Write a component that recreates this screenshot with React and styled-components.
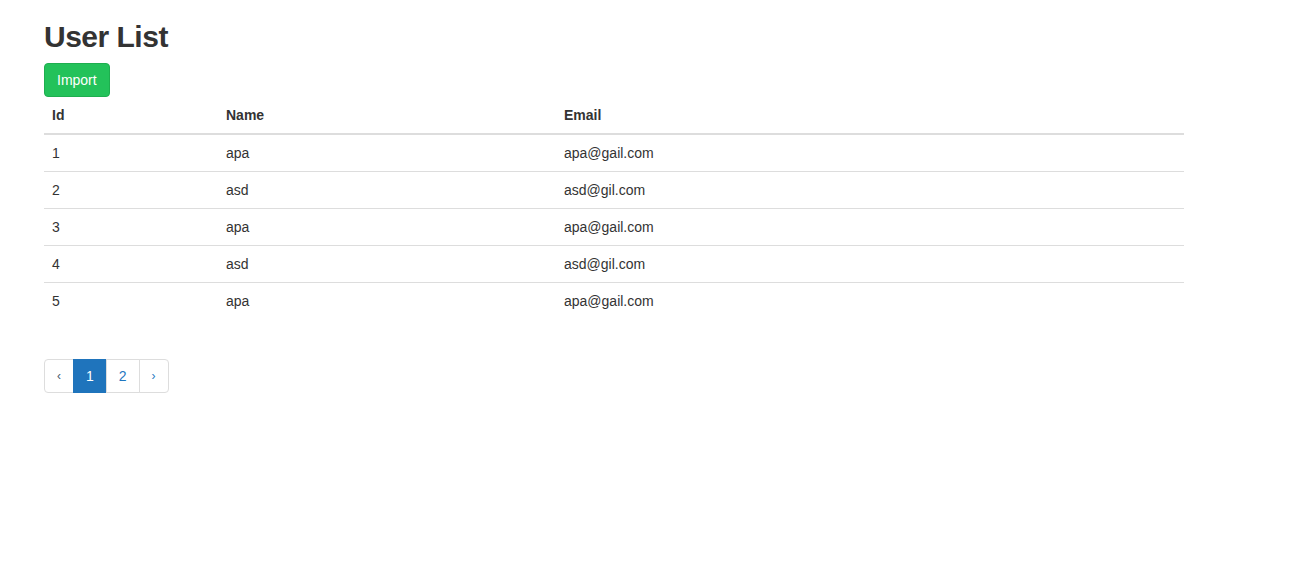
import styled, { createGlobalStyle } from 'styled-components';

const GlobalStyle = createGlobalStyle`
  body {
    margin: 0;
    background: #fff;
    font-family: "Liberation Sans", Arial, Helvetica, sans-serif;
    font-size: 14px;
    line-height: 1.42857;
    color: #333;
  }
  * { box-sizing: border-box; }
`

const users = [
    {id: 1, name: 'apa', email: 'apa@gail.com'},
    {id: 2, name: 'asd', email: 'asd@gil.com'},
    {id: 3, name: 'apa', email: 'apa@gail.com'},
    {id: 4, name: 'asd', email: 'asd@gil.com'},
    {id: 5, name: 'apa', email: 'apa@gail.com'},
]

const App = () => {
    return (
        <>
            <GlobalStyle/>
            <Container>
                <Title>User List</Title>
                <ImportButton type={'button'}>Import</ImportButton>
                <Table>
                    <thead>
                    <tr>
                        <Th width={174}>Id</Th>
                        <Th width={338}>Name</Th>
                        <Th>Email</Th>
                    </tr>
                    </thead>
                    <tbody>
                    {users.map(u => (
                        <tr key={u.id}>
                            <Td>{u.id}</Td>
                            <Td>{u.name}</Td>
                            <Td>{u.email}</Td>
                        </tr>
                    ))}
                    </tbody>
                </Table>
                <Pagination>
                    <PageItem $muted>‹</PageItem>
                    <PageItem $active>1</PageItem>
                    <PageItem>2</PageItem>
                    <PageItem $small>›</PageItem>
                </Pagination>
            </Container>
        </>
    );
}

export default App;

const Container = styled.div`
  width: 1140px;
  margin-left: 44px;
`

const Title = styled.h2`
  margin: 20px 0 10px;
  font-size: 30px;
  font-weight: bold;
  letter-spacing: -0.5px;
  line-height: 1.1;
  color: #333;
`

const ImportButton = styled.button`
  display: block;
  height: 34px;
  padding: 6px 12px;
  font-family: inherit;
  font-size: 14px;
  line-height: 20px;
  color: #fff;
  background-color: #23c25a;
  border: 1px solid #1eae4f;
  border-radius: 4px;
`

const Table = styled.table`
  width: 100%;
  border-collapse: collapse;
  border-spacing: 0;
  margin-bottom: 20px;

  tbody tr + tr td {
    border-top: 1px solid #ddd;
  }
`

const Th = styled.th`
  width: ${p => p.width ? `${p.width}px` : 'auto'};
  padding: 8px;
  text-align: left;
  font-weight: bold;
  line-height: 20px;
  border-bottom: 2px solid #ddd;
`

const Td = styled.td`
  padding: 8px;
  line-height: 20px;
  vertical-align: top;
`

const Pagination = styled.div`
  display: inline-flex;
  margin: 20px 0;
  border-radius: 4px;
`

const PageItem = styled.span`
  display: block;
  height: 34px;
  padding: 6px 12px;
  line-height: 20px;
  font-size: ${p => p.$muted || p.$small ? '12px' : '14px'};
  color: ${p => p.$active ? '#fff' : p.$muted ? '#4a5a6a' : '#1f76bf'};
  background: ${p => p.$active ? '#1f74bc' : '#fff'};
  border: 1px solid ${p => p.$active ? '#1f74bc' : '#ddd'};
  margin-left: -1px;

  &:first-child {
    margin-left: 0;
    border-radius: 4px 0 0 4px;
  }
  &:last-child {
    border-radius: 0 4px 4px 0;
  }
`
